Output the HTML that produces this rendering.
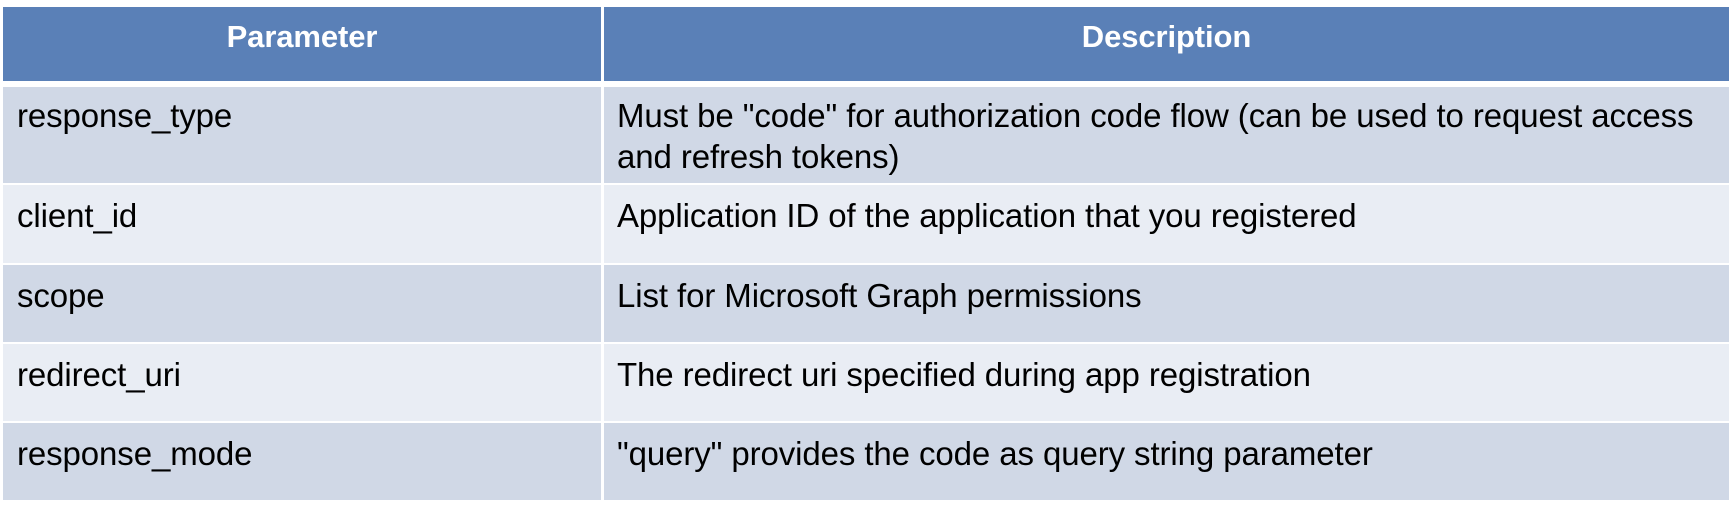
<!DOCTYPE html>
<html><head><style>
body{margin:0;width:1734px;height:508px;background:#fff;position:relative;overflow:hidden;font-family:"Liberation Sans",sans-serif;}
.r{position:absolute;left:3px;width:1726px;}
.c{position:absolute;top:0;bottom:0;}
.a{left:0;width:598px;}
.b{left:601px;right:0;}
.h{background:#5a80b7;}
.o{background:#d0d8e6;}
.e{background:#e9edf4;}
.t{position:absolute;font-size:33px;color:#000;line-height:41px;white-space:nowrap;letter-spacing:-0.1px;}
.hd{color:#fff;font-weight:bold;font-size:31px;line-height:42px;top:9px;width:100%;text-align:center;}
</style></head><body>
<div class="r" style="top:7px;height:74px"><div class="c a h"><div class="t hd">Parameter</div></div><div class="c b h"><div class="t hd">Description</div></div></div>
<div class="r" style="top:87px;height:96px"><div class="c a o"><div class="t" style="left:14px;top:8px">response_type</div></div><div class="c b o"><div class="t" style="left:13px;top:8px">Must be "code" for authorization code flow (can be used to request access<br>and refresh tokens)</div></div></div>
<div class="r" style="top:185px;height:78px"><div class="c a e"><div class="t" style="left:14px;top:10px">client_id</div></div><div class="c b e"><div class="t" style="left:13px;top:10px">Application ID of the application that you registered</div></div></div>
<div class="r" style="top:265px;height:77px"><div class="c a o"><div class="t" style="left:14px;top:10px">scope</div></div><div class="c b o"><div class="t" style="left:13px;top:10px">List for Microsoft Graph permissions</div></div></div>
<div class="r" style="top:344px;height:77px"><div class="c a e"><div class="t" style="left:14px;top:10px">redirect_uri</div></div><div class="c b e"><div class="t" style="left:13px;top:10px">The redirect uri specified during app registration</div></div></div>
<div class="r" style="top:423px;height:77px"><div class="c a o"><div class="t" style="left:14px;top:10px">response_mode</div></div><div class="c b o"><div class="t" style="left:13px;top:10px">"query" provides the code as query string parameter</div></div></div>
</body></html>
